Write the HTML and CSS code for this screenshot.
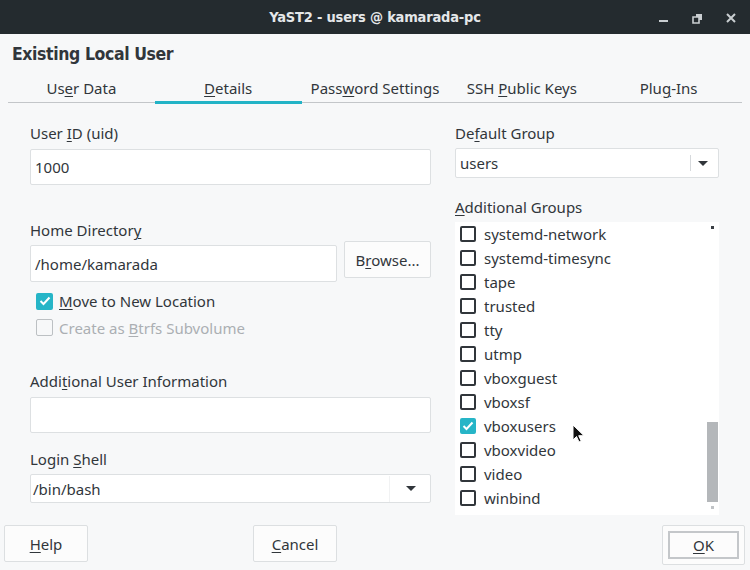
FILE: index.html
```html
<!DOCTYPE html>
<html>
<head>
<meta charset="utf-8">
<link rel="stylesheet" href="styles.css">
</head>
<body>
<div class="window">
  <header class="titlebar">
    <div></div>
    <div class="title">YaST2 - users @ kamarada-pc</div>
    <div class="wm">
      <svg class="wm-btn" width="14" height="14" viewBox="0 0 14 14"><rect x="3" y="9" width="9" height="2" fill="#c9ced1"/></svg>
      <svg class="wm-btn" width="14" height="14" viewBox="0 0 14 14"><path d="M3 6h6v6H3z" fill="none" stroke="#c9ced1" stroke-width="1.6"/><path d="M6 3h6v6H9V6H6z" fill="#c9ced1"/></svg>
      <svg class="wm-btn" width="14" height="14" viewBox="0 0 14 14"><path d="M3 3l8 8M11 3l-8 8" stroke="#c9ced1" stroke-width="2"/></svg>
    </div>
  </header>

  <h1 class="heading">Existing Local User</h1>

  <nav class="tabs">
    <div class="tab">Us<u>e</u>r Data</div>
    <div class="tab active"><u>D</u>etails</div>
    <div class="tab">Pass<u>w</u>ord Settings</div>
    <div class="tab">SSH <u>P</u>ublic Keys</div>
    <div class="tab">Plu<u>g</u>-Ins</div>
  </nav>

  <main class="content">
    <section class="col left">
      <label class="lbl lbl-first">User <u>I</u>D (uid)</label>
      <div class="input h36">1000</div>

      <label class="lbl lbl-home">Home Director<u>y</u></label>
      <div class="home-row">
        <div class="input home-input">/home/kamarada</div>
        <button class="btn browse">B<u>r</u>owse...</button>
      </div>
      <div class="check-row first-check">
        <span class="box checked"><svg width="12" height="10" viewBox="0 0 12 10"><path d="M1.5 5l3 3 6-6.5" fill="none" stroke="#fff" stroke-width="2"/></svg></span>
        <span><u>M</u>ove to New Location</span>
      </div>
      <div class="check-row disabled">
        <span class="box"></span>
        <span>Create as <u>B</u>trfs Subvolume</span>
      </div>

      <label class="lbl lbl-info">Addi<u>t</u>ional User Information</label>
      <div class="input h36"></div>

      <label class="lbl lbl-shell">Login <u>S</u>hell</label>
      <div class="combo shell">
        <span class="combo-text">/bin/bash</span>
        <span class="combo-sep faint"></span>
        <span class="arrow"></span>
      </div>
    </section>

    <section class="col right">
      <label class="lbl lbl-first">De<u>f</u>ault Group</label>
      <div class="combo group">
        <span class="combo-text">users</span>
        <span class="combo-sep"></span>
        <span class="arrow"></span>
      </div>

      <label class="lbl lbl-groups"><u>A</u>dditional Groups</label>
      <div class="list">
        <div class="items">
          <div class="item"><span class="box"></span>systemd-network</div>
          <div class="item"><span class="box"></span>systemd-timesync</div>
          <div class="item"><span class="box"></span>tape</div>
          <div class="item"><span class="box"></span>trusted</div>
          <div class="item"><span class="box"></span>tty</div>
          <div class="item"><span class="box"></span>utmp</div>
          <div class="item"><span class="box"></span>vboxguest</div>
          <div class="item"><span class="box"></span>vboxsf</div>
          <div class="item"><span class="box checked"><svg width="12" height="10" viewBox="0 0 12 10"><path d="M1.5 5l3 3 6-6.5" fill="none" stroke="#fff" stroke-width="2"/></svg></span>vboxusers</div>
          <div class="item"><span class="box"></span>vboxvideo</div>
          <div class="item"><span class="box"></span>video</div>
          <div class="item"><span class="box"></span>winbind</div>
        </div>
        <div class="scrollbar">
          <span class="sb-dot dark"></span>
          <span class="sb-thumb"></span>
          <span class="sb-dot"></span>
        </div>
      </div>
    </section>
  </main>

  <footer class="footer">
    <button class="btn foot help"><u>H</u>elp</button>
    <button class="btn foot cancel"><u>C</u>ancel</button>
    <button class="btn foot ok"><span class="focus"><u>O</u>K</span></button>
  </footer>

  <svg class="cursor" width="14" height="20" viewBox="0 0 14 20"><path d="M1 1v15l3.5-3.5 2.5 5.5 2.2-1-2.5-5.3H12z" fill="#111" stroke="#fff" stroke-width="1"/></svg>
</div>
</body>
</html>
```

FILE: styles.css
```css
* { box-sizing: border-box; }
html, body { margin: 0; padding: 0; }
body {
  width: 750px;
  height: 570px;
  overflow: hidden;
  font-family: "Noto Sans", "Open Sans", sans-serif;
  font-size: 15px;
  color: #31363b;
  background: #f7f8f9;
}
u { text-decoration: underline; text-underline-offset: 2px; text-decoration-thickness: 1px; }
.window {
  position: relative;
  width: 750px;
  height: 570px;
  display: flex;
  flex-direction: column;
}
.titlebar {
  height: 34px;
  flex: none;
  background: #242b2f;
  display: grid;
  grid-template-columns: 1fr auto 1fr;
  align-items: center;
}
.title {
  color: #e4e7e9;
  font-family: "DejaVu Sans Condensed", "DejaVu Sans", sans-serif;
  font-size: 14.5px;
  font-weight: bold;
  letter-spacing: -0.2px;
}
.wm {
  display: flex;
  justify-content: flex-end;
  gap: 20px;
  padding-right: 12px;
  padding-top: 2px;
}
.wm-btn { display: block; }
.heading {
  margin: 0;
  flex: none;
  height: 38px;
  padding: 8px 0 0 12px;
  font-family: "DejaVu Sans Condensed", "DejaVu Sans", sans-serif;
  font-size: 17.5px;
  line-height: 24px;
  font-weight: bold;
  letter-spacing: -0.4px;
  color: #31363b;
}
.tabs {
  flex: none;
  margin: 0 8px;
  height: 31px;
  display: grid;
  grid-template-columns: repeat(5, 1fr);
  border-bottom: 1px solid #c3c6c9;
}
.tab {
  position: relative;
  text-align: center;
  line-height: 28px;
  padding-top: 2px;
}
.tab.active::after {
  content: "";
  position: absolute;
  left: 0; right: 0; bottom: -2px;
  height: 3px;
  background: #22b3c6;
}
.content {
  flex: 1;
  display: grid;
  grid-template-columns: 401px 264px;
  column-gap: 24px;
  padding-left: 30px;
}
.col { display: flex; flex-direction: column; }
.lbl { display: block; line-height: 20px; height: 20px; }
.lbl-first { margin-top: 20px; }
.lbl-home { margin-top: 35px; }
.lbl-info { margin-top: 30px; }
.lbl-shell { margin-top: 16px; }
.lbl-groups { margin-top: 19px; }
.input {
  background: #fff;
  border: 1px solid #dde0e2;
  border-radius: 2px;
  padding-left: 4px;
  display: flex;
  align-items: center;
}
.h36 { height: 36px; margin-top: 6px; }
.home-row {
  margin-top: 1px;
  display: flex;
  align-items: flex-start;
  gap: 7px;
}
.home-input { flex: 1; height: 37px; margin-top: 4px; }
.btn {
  font-family: inherit;
  font-size: 15px;
  color: #31363b;
  background: #fcfcfc;
  border: 1px solid #dcdfe1;
  border-radius: 2px;
  padding: 0;
}
.browse { width: 87px; height: 37px; }
.check-row {
  height: 26px;
  display: flex;
  align-items: center;
  gap: 6px;
  padding-left: 6px;
}
.check-row.disabled { height: 27px; }
.first-check { margin-top: 6px; }
.box {
  flex: none;
  width: 16px;
  height: 16px;
  border: 2px solid #31363b;
  border-radius: 2px;
  display: flex;
  align-items: center;
  justify-content: center;
  background: #fff;
}
.check-row .box { width: 17px; height: 17px; }
.box.checked { background: #26b5c7; border-color: #26b5c7; }
.disabled { color: #abafb3; }
.disabled .box { border-color: #bcc0c3; border-width: 1.5px; background: transparent; }
.combo {
  position: relative;
  background: #fff;
  border: 1px solid #dde0e2;
  border-radius: 2px;
  display: flex;
  align-items: center;
}
.combo.group { height: 30px; margin-top: 5px; padding-left: 4px; }
.combo.shell { height: 29px; margin-top: 5px; padding-left: 2px; }
.combo-text { flex: 1; }
.combo-sep { width: 1px; height: 16px; background: #d6d9dc; margin-right: 7px; }
.combo-sep.faint { background: #f1f2f3; height: 26px; margin-right: 16px; }
.arrow {
  width: 0; height: 0;
  border-left: 5px solid transparent;
  border-right: 5px solid transparent;
  border-top: 5px solid #31363b;
  margin-right: 10px;
}
.shell .arrow { margin-right: 14px; }
.list {
  margin-top: 5px;
  height: 293px;
  background: #fff;
  display: flex;
}
.items { flex: 1; }
.item {
  height: 24px;
  display: flex;
  align-items: center;
  gap: 8px;
  padding-left: 5px;
}
.scrollbar {
  width: 12px;
  margin-right: 1px;
  display: flex;
  flex-direction: column;
  align-items: center;
  padding-top: 4px;
}
.sb-dot { width: 3px; height: 3px; background: #c0c3c6; }
.sb-dot.dark { background: #3a3f44; }
.sb-thumb { width: 11px; height: 80px; background: #b4b7ba; margin-top: 193px; margin-bottom: 4px; }
.footer {
  flex: none;
  height: 45px;
  display: flex;
  align-items: flex-start;
  padding: 0 5px 0 4px;
}
.foot { width: 84px; height: 37px; }
.cancel { margin-left: 165px; }
.ok {
  margin-left: auto;
  width: 83px;
  height: 40px;
  padding: 5px;
  display: flex;
}
.focus {
  flex: 1;
  border: 2px solid #c4c7ca;
  display: flex;
  align-items: center;
  justify-content: center;
}
.cursor {
  position: absolute;
  left: 572px;
  top: 424px;
}
```
